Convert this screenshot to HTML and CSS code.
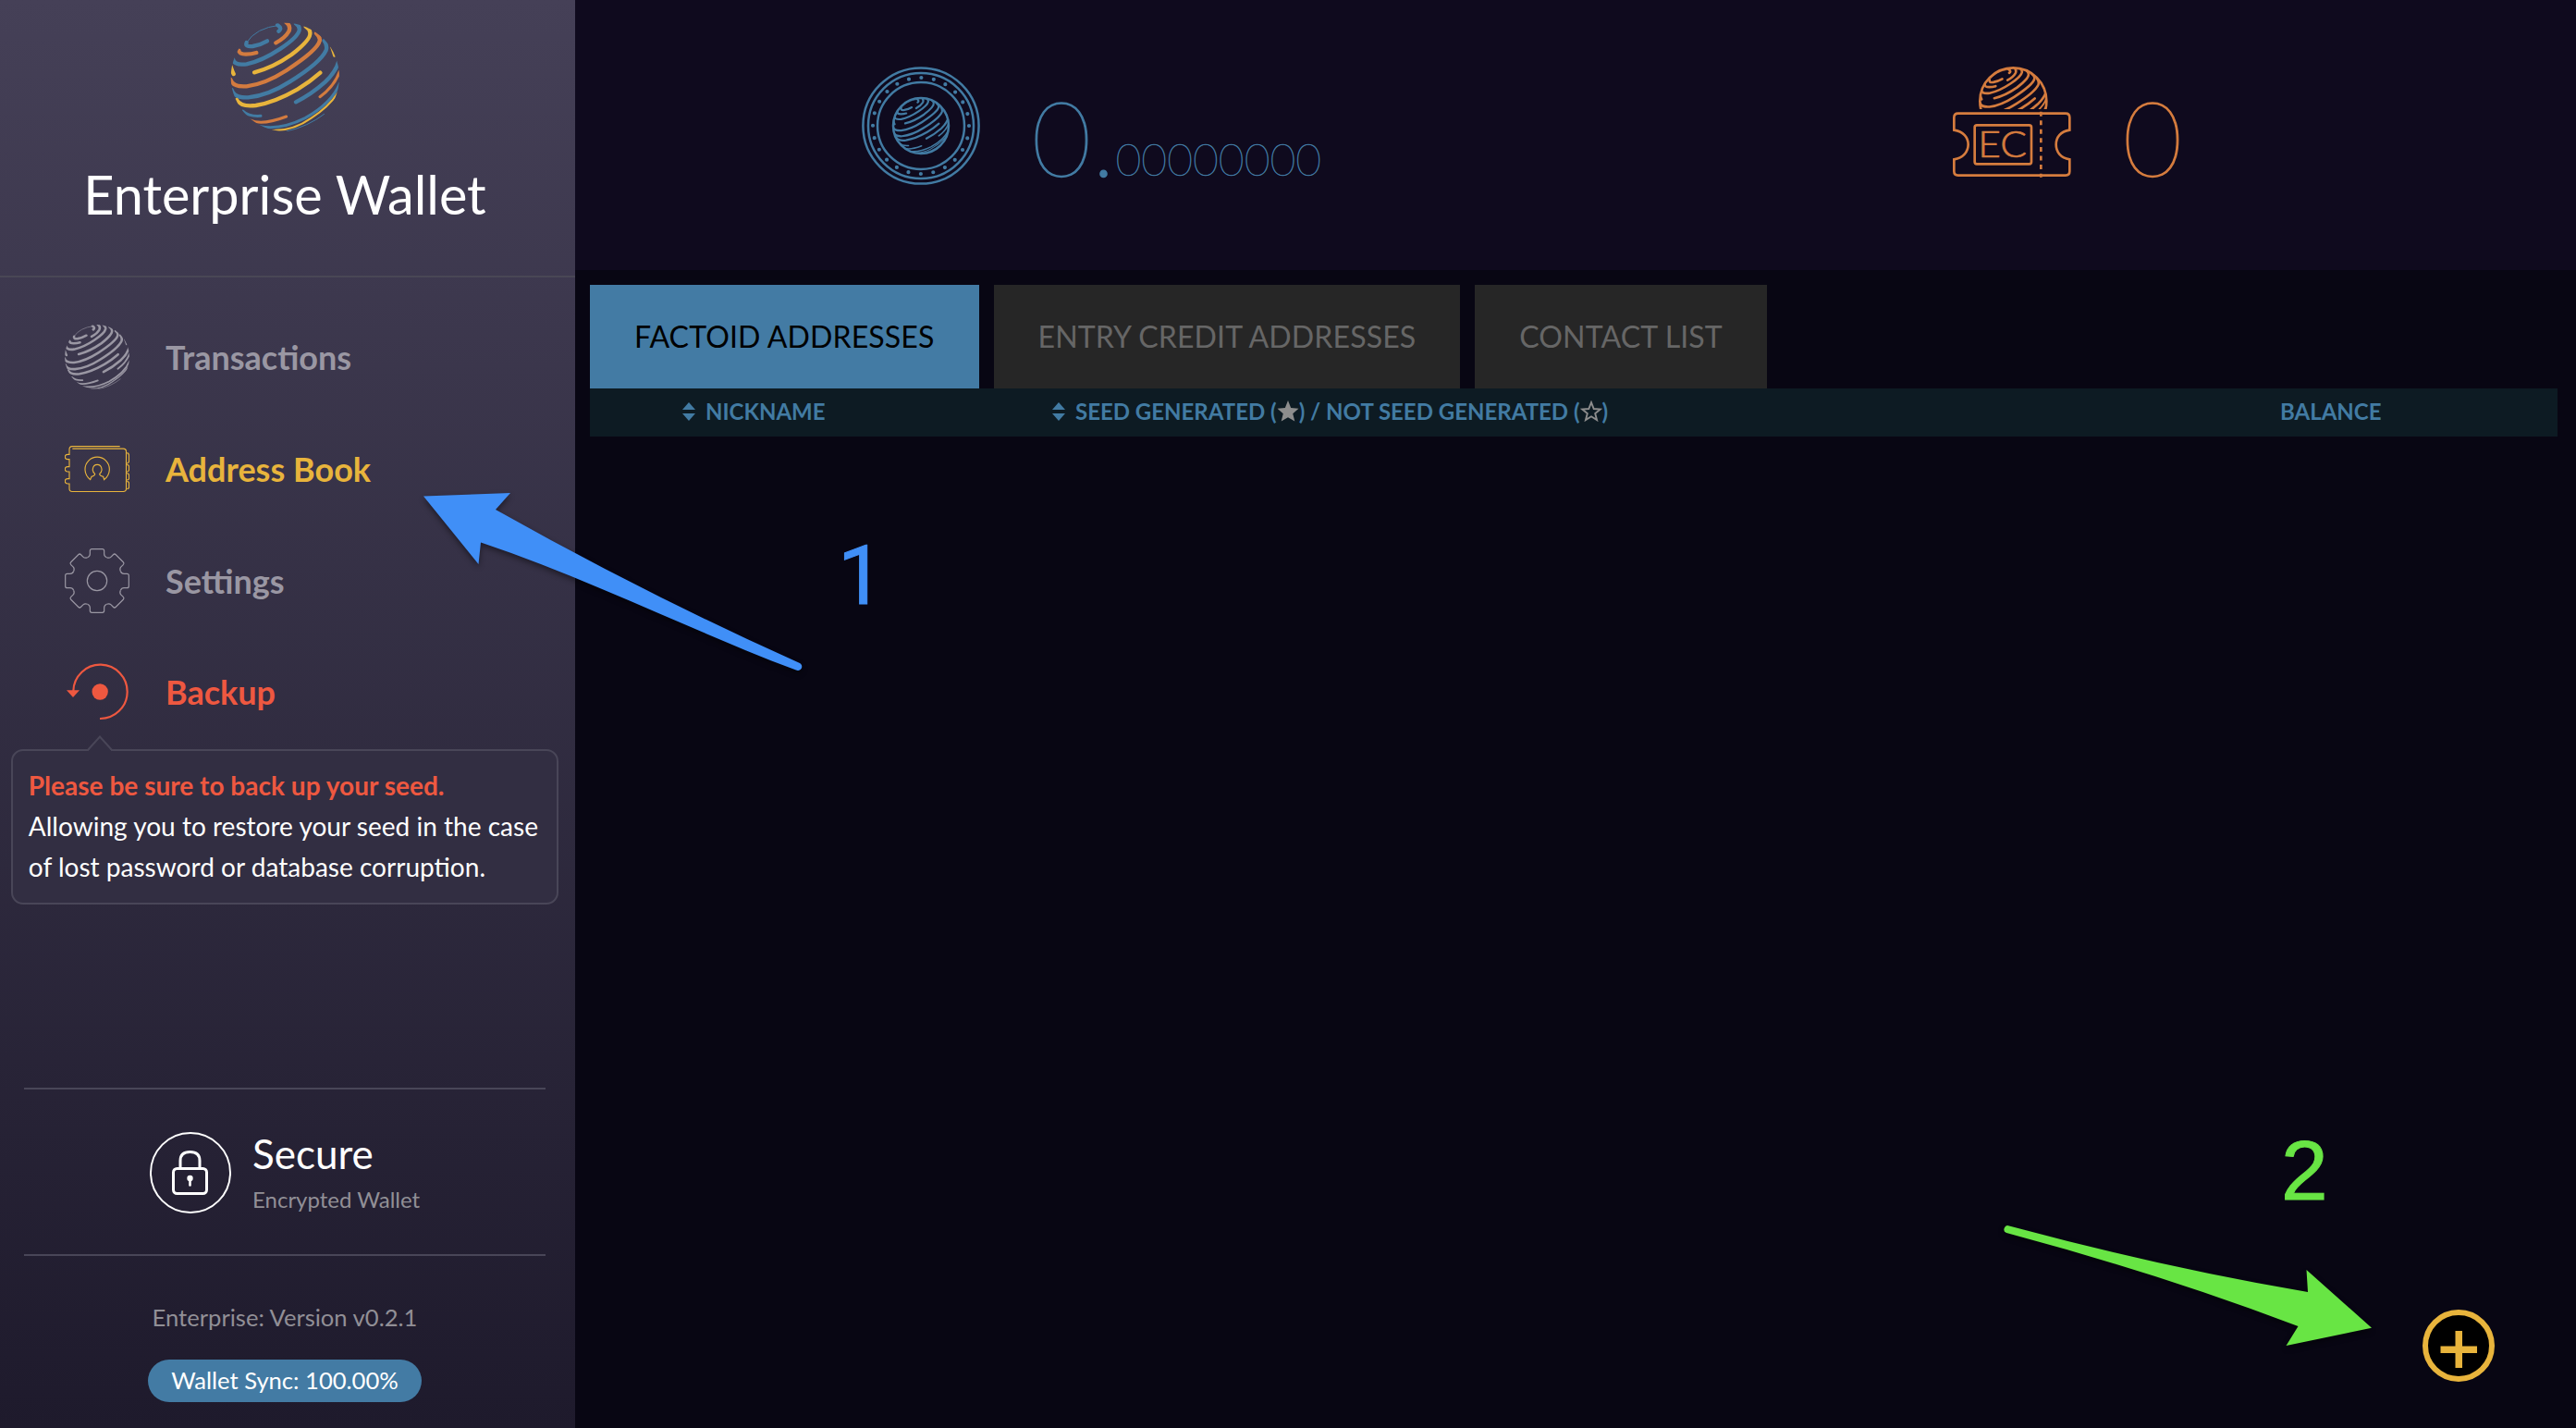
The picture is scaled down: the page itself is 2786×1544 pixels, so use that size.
FILE: index.html
```html
<!DOCTYPE html>
<html lang="en">
<head>
<meta charset="utf-8">
<title>Enterprise Wallet</title>
<link rel="stylesheet" href="styles.css">
</head>
<body>
<svg class="defs" width="0" height="0" aria-hidden="true">
  <defs>
    <clipPath id="ball"><circle cx="205" cy="202" r="176"/></clipPath>
    <clipPath id="dome"><rect x="90" y="60" width="400" height="144"/></clipPath>
    <symbol id="globe" viewBox="0 0 408 408">
      <g class="globe-lines" clip-path="url(#ball)">
        <path class="blue thin" d="M80 90Q110 42 186 34"/>
        <path class="blue" d="M184 53Q197 44 180 33"/>
        <path class="blue" d="M80 90Q74 105 100 102Q125 98 147 85"/>
        <path class="orange" d="M175 91Q205 75 217 54Q225 36 208 24"/>
        <path class="orange" d="M55 116Q56 128 78 128Q95 128 112 123"/>
        <path class="blue" d="M36 144Q40 165 80 160Q130 150 190 110Q247 72 251 50Q253 36 240 28"/>
        <path class="yellow" d="M105 187Q165 172 225 130Q290 80 286 58Q285 46 272 38"/>
        <path class="yellow" d="M28 166Q34 184 38 192"/>
        <path class="yellow narrow" d="M356 105L365 133"/>
        <path class="orange" d="M28 210Q35 235 80 232Q140 225 210 180Q310 115 317 85Q320 72 306 60"/>
        <path class="blue" d="M32 244Q40 270 85 268Q150 262 220 217Q320 155 338 115Q343 100 332 84"/>
        <path class="yellow" d="M48 276Q62 300 110 294Q170 285 245 242Q285 218 319 188"/>
        <path class="blue" d="M240 283Q290 258 335 218Q370 185 380 148"/>
        <path class="orange narrow" d="M318 266Q365 232 382 184"/>
        <path class="blue narrow" d="M68 312Q88 331 126 328"/>
        <path class="orange narrow" d="M92 342Q130 360 209 330"/>
        <path class="blue narrow" d="M124 362Q190 375 270 335Q355 288 382 224"/>
        <path class="yellow slim" d="M160 375Q230 378 290 335Q345 300 376 254"/>
        <path class="blue thin" d="M210 378Q280 362 332 322"/>
      </g>
    </symbol>
    <symbol id="sort" viewBox="0 0 14 20"><path d="M7 0L14 8H0zM7 20L0 12H14z" fill="currentColor"/></symbol>
  </defs>
</svg>

<div class="app">
  <aside class="sidebar">
    <header class="brand">
      <svg class="brand-logo"><use href="#globe"/></svg>
      <h1 class="brand-name">Enterprise Wallet</h1>
    </header>

    <nav class="menu">
      <a class="menu-item">
        <svg class="menu-icon globe-mono" viewBox="29 26 352 352"><use href="#globe" width="408" height="408"/></svg>
        <span>Transactions</span>
      </a>
      <a class="menu-item active">
        <svg class="menu-icon" viewBox="90 426 210 210" fill="none" stroke="currentColor" stroke-width="3.4">
          <path d="M115 465.500H280Q289.500 465.500 289.500 475V595Q289.500 604.500 280 604.500H114Q105 604.500 105 595V579H99a7.500 7.500 0 0 1 0-16H105V540H99a7.500 7.500 0 0 1 0-16H105V500H99a7.500 7.500 0 0 1 0-16H105V468Q105 458 114 458H269"/>
          <path d="M292 479Q298.500 480 298.500 487V508L292 514M292 517Q298.500 518 298.500 523V536L292 541M292 545Q298.500 546 298.500 551V564L292 568M292 571Q298.500 572 298.500 577V590Q298.500 596 292 596"/>
          <path d="M173 566Q156 552 156 532A39.500 39.500 0 0 1 235 532Q235 552 218 566L215 556Q203 554 203 547Q211 541 210 531Q208 517 195.500 517Q183 517 181 531Q180 541 188 547Q188 554 177 556Z"/>
        </svg>
        <span>Address Book</span>
      </a>
      <a class="menu-item">
        <svg class="menu-icon" viewBox="-105 -105 210 210" fill="none" stroke="currentColor" stroke-width="3.600">
          <defs><path id="tooth" d="M-31.400 -75.800Q-23 -79.300 -23 -87V-97Q-23 -103 -17 -103H17Q23 -103 23 -97V-87Q23 -79.300 31.400 -75.800"/></defs>
          <use href="#tooth"/><use href="#tooth" transform="rotate(45)"/><use href="#tooth" transform="rotate(90)"/><use href="#tooth" transform="rotate(135)"/>
          <use href="#tooth" transform="rotate(180)"/><use href="#tooth" transform="rotate(225)"/><use href="#tooth" transform="rotate(270)"/><use href="#tooth" transform="rotate(315)"/>
          <circle r="32"/>
        </svg>
        <span>Settings</span>
      </a>
      <a class="menu-item alert">
        <svg class="menu-icon" viewBox="90 462 210 210">
          <path d="M118 564A87.500 87.500 0 1 1 204 654" fill="none" stroke="currentColor" stroke-width="6.500"/>
          <path d="M96 562H138L117 585Z" fill="currentColor"/>
          <circle cx="204.500" cy="567" r="26" fill="currentColor"/>
        </svg>
        <span>Backup</span>
      </a>
    </nav>

    <section class="notice">
      <svg class="notice-tip" viewBox="0 0 30 18"><path class="notice-tip-fill" d="M1.500 18L15 1.500L28.500 18Z"/><path class="notice-tip-line" d="M1.500 16.500L15 1.500L28.500 16.500"/></svg>
      <strong>Please be sure to back up your seed.</strong>
      <p>Allowing you to restore your seed in the case of lost password or database corruption.</p>
    </section>

    <footer class="status">
      <div class="secure">
        <svg class="lock" viewBox="0 0 88 88" fill="none" stroke="#fff">
          <circle cx="44" cy="44" r="43" stroke-width="2"/>
          <rect x="25.500" y="39.500" width="36" height="27" rx="4" stroke-width="3"/>
          <path d="M33 39V31Q33 21.500 43.500 21.500T54 31V39" stroke-width="3"/>
          <circle cx="43.500" cy="50" r="3.200" fill="#fff" stroke="none"/>
          <path d="M43.500 50V57.500" stroke-width="2.600" stroke-linecap="round"/>
        </svg>
        <div class="secure-text">
          <div class="secure-title">Secure</div>
          <div class="secure-note">Encrypted Wallet</div>
        </div>
      </div>
      <div class="version">Enterprise: Version v0.2.1</div>
      <div class="sync">Wallet Sync: 100.00%</div>
    </footer>
  </aside>

  <main class="content">
    <header class="balances">
      <div class="balance factoid">
        <svg class="balance-icon" viewBox="0 0 128 128" fill="none" stroke="currentColor" stroke-width="2.500">
          <circle cx="64" cy="64" r="62.600"/><circle cx="64" cy="64" r="57"/><circle cx="64" cy="64" r="47"/>
          <circle cx="64" cy="64" r="52" stroke-width="4.200" stroke-linecap="round" stroke-dasharray="0 13.614"/>
          <circle cx="64" cy="64" r="30"/>
          <svg class="globe-mono" x="34" y="34" width="60" height="60" viewBox="29 26 352 352"><use href="#globe" width="408" height="408"/></svg>
        </svg>
        <span class="whole">0.</span><span class="fraction">00000000</span>
      </div>
      <div class="balance credit">
        <svg class="balance-icon" viewBox="96 66 384 384" fill="none" stroke="currentColor" stroke-width="8">
          <g clip-path="url(#dome)">
            <circle cx="292" cy="178" r="108"/>
            <svg class="globe-mono" x="184" y="70" width="216" height="216" viewBox="29 26 352 352"><use href="#globe" width="408" height="408"/></svg>
          </g>
          <path d="M113 218H462Q475 218 475 231V272C445 276 431 296 431 319S445 362 475 367V406Q475 419 462 419H113Q100 419 100 406V367C130 362 146 342 146 319S130 276 100 272V231Q100 218 113 218Z"/>
          <rect x="167" y="256" width="184" height="126" rx="7"/>
          <path d="M382 212V425" stroke-dasharray="15 13.700"/>
          <text class="ec" x="178" y="360" textLength="158" lengthAdjust="spacingAndGlyphs">EC</text>
        </svg>
        <span class="whole">0</span>
      </div>
    </header>

    <section class="addresses">
      <div class="tabs">
        <a class="tab current">FACTOID ADDRESSES</a>
        <a class="tab">ENTRY CREDIT ADDRESSES</a>
        <a class="tab">CONTACT LIST</a>
      </div>
      <div class="table-head">
        <div class="col"><svg class="sort"><use href="#sort"/></svg>NICKNAME</div>
        <div class="col"><svg class="sort"><use href="#sort"/></svg>SEED GENERATED (<svg class="star" viewBox="0 0 22 22"><path d="M11 0L14 7.700L22 8.300L16 13.600L18 21.600L11 17.400L4 21.600L6 13.600L0 8.300L8 7.700Z" fill="currentColor"/></svg>) / NOT SEED GENERATED (<svg class="star" viewBox="0 0 22 22"><path d="M11 2L13.600 8.600L20.300 9.100L15 13.400L16.800 20.200L11 16.500L5.200 20.200L7 13.400L1.700 9.100L8.400 8.600Z" fill="none" stroke="currentColor" stroke-width="1.800"/></svg>)</div>
        <div class="col">BALANCE</div>
      </div>
    </section>
  </main>
</div>

<button class="add" aria-label="Add address">
  <svg viewBox="0 0 78 78"><path d="M35.500 23H43V39.500H59V47H43V63H35.500V47H19.500V39.500H35.500Z" fill="currentColor"/></svg>
</button>

<svg class="annotations" viewBox="0 0 2786 1544">
  <path class="mark-blue shadow" d="M458 536.500L552 533L536 551Q699.500 643 865 717A4 4 0 0 1 861 724.500C750 683 640 627 520 586.500L517.500 610Z"/>
  <path class="mark-green shadow" d="M2565 1435.800L2494.500 1373L2496 1397Q2340 1370.500 2173 1325.500A4 4 0 0 0 2170 1333Q2335 1377 2485.500 1434L2472.500 1455Z"/>
  <text class="mark-blue digit-one" x="906" y="653">1</text>
  <text class="mark-green digit-two" x="2467" y="1297">2</text>
</svg>
</body>
</html>
```

FILE: styles.css
```css
* { box-sizing: border-box; }

body {
  margin: 0;
  background: #080613;
  font-family: Lato, "Liberation Sans", sans-serif;
  color: #fff;
}

.defs { position: absolute; }

.app { display: flex; width: 2786px; height: 1544px; overflow: hidden; }

/* Sidebar */
.sidebar {
  display: flex;
  flex-direction: column;
  width: 622px;
  flex: none;
  background: linear-gradient(#454057, #1e1a2c);
}

.brand {
  display: flex;
  flex-direction: column;
  align-items: center;
  gap: 23px;
  height: 300px;
  padding: 16px 6px 0 0;
  border-bottom: 2px solid #494755;
}
.brand-logo { width: 136px; height: 136px; }
.brand-name { margin: 0; font-size: 57.6px; font-weight: 400; line-height: 70px; }

.menu { padding: 25.6px 0 0 70px; }
.menu-item {
  display: flex;
  align-items: center;
  gap: 39px;
  height: 120.8px;
  color: #9a97a3;
  font-size: 36px;
  font-weight: 700;
}
.menu-icon { width: 70px; height: 70px; }
.menu-item.active { color: #e8b43c; }
.menu-item.alert { color: #ee5840; }

.notice {
  position: relative;
  width: 592px;
  height: 168px;
  margin: 1.2px 0 0 12px;
  padding: 15px 10px 15px 16.8px;
  border: 2px solid #494658;
  border-radius: 13px;
  background: #322e42;
  font-size: 28.05px;
  line-height: 44px;
}
.notice strong { display: block; color: #ee5840; }
.notice p { margin: 0; }
.notice-tip { position: absolute; left: 79px; top: -17px; width: 30px; height: 18px; }
.notice-tip-fill { fill: #322e42; }
.notice-tip-line { fill: none; stroke: #494658; stroke-width: 2; }

.status {
  display: flex;
  flex-direction: column;
  align-items: center;
  margin-top: auto;
  padding: 0 32px 28px 26px;
}
.secure {
  display: flex;
  align-items: center;
  align-self: stretch;
  gap: 23px;
  height: 182px;
  padding: 2px 0 0 136px;
  border: solid #494658;
  border-width: 2px 0;
}
.lock { width: 88px; height: 88px; }
.secure-text { padding-bottom: 4px; }
.secure-title { font-size: 44px; line-height: 52px; }
.secure-note { margin-top: 9px; color: #918f96; font-size: 24px; line-height: 30px; }
.version { margin-top: 50px; color: #918f96; font-size: 25.6px; line-height: 32px; }
.sync {
  width: 296px;
  height: 46px;
  margin-top: 30px;
  border-radius: 23px;
  background: #437ba4;
  font-size: 25.6px;
  line-height: 45px;
  text-align: center;
}

/* Globe strokes */
.globe-lines { fill: none; stroke-width: 13; stroke-linecap: round; }
.blue { stroke: var(--mono, #427ba3); }
.orange { stroke: var(--mono, #d37b3f); }
.yellow { stroke: var(--mono, #e8b43c); }
.narrow { stroke-width: 9; }
.slim { stroke-width: 6; }
.thin { stroke-width: 3; }
.globe-mono { --mono: currentColor; }

/* Main area */
.content { flex: 1; }
.balances {
  display: flex;
  height: 292px;
  padding: 72px 0 0 310px;
  background: #0f0a1e;
}
.balance { display: flex; }
.factoid { width: 1180px; color: #427ba3; }
.credit { color: #d57c3e; }
.balance-icon { width: 128px; height: 128px; margin-right: 55.5px; }
.whole {
  font-size: 112px;
  font-weight: 100;
  line-height: 151px;
  -webkit-text-stroke: 1.3px currentColor;
}
.fraction { font-size: 48px; font-weight: 100; line-height: 199px; -webkit-text-stroke: 0.5px currentColor; }
.ec { fill: currentColor; stroke: currentColor; stroke-width: 2; font-size: 118px; font-weight: 300; }

.addresses { padding: 16px 20px 0 16px; }
.tabs { display: flex; gap: 16px; }
.tab {
  height: 112px;
  padding: 0 48px;
  background: #262626;
  color: #666;
  font-size: 32.1px;
  letter-spacing: 0.1px;
  line-height: 112px;
}
.tab.current { background: #437ba4; color: #000; }

.table-head {
  display: grid;
  grid-template-columns: 400px 1329px auto;
  align-items: center;
  height: 52px;
  padding: 0 0 3px 99px;
  background: #0d1b23;
  color: #427ba3;
  font-size: 24px;
  font-weight: 700;
}
.col { display: flex; align-items: center; white-space: pre; }
.sort { width: 16px; height: 20px; margin-right: 10px; }
.star { width: 24px; height: 23px; color: #8d8d8d; }

.add {
  position: absolute;
  left: 2620px;
  top: 1416px;
  width: 78px;
  height: 78px;
  padding: 0;
  border: 6px solid #e8b43c;
  border-radius: 50%;
  background: #000;
  color: #e8b43c;
}
.add svg { display: block; width: 78px; height: 78px; margin: -6px; }

/* Callouts drawn over the page */
.annotations { position: absolute; left: 0; top: 0; width: 2786px; height: 1544px; pointer-events: none; }
.mark-blue { fill: #408ff7; }
.mark-green { fill: #68e544; }
.shadow { filter: drop-shadow(0 3px 3px rgba(0, 0, 0, .45)); }
.digit-one { font: 89px Roboto, sans-serif; stroke: #408ff7; stroke-width: 1; }
.digit-two { font: 91px "Liberation Sans", sans-serif; stroke: #68e544; stroke-width: 1; }
```
